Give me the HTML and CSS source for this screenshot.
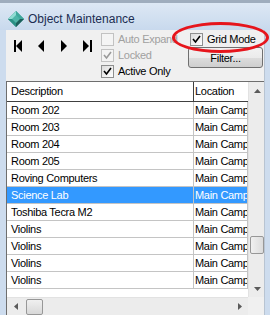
FILE: index.html
```html
<!DOCTYPE html>
<html>
<head>
<meta charset="utf-8">
<link rel="stylesheet" href="styles.css">
</head>
<body>
<div class="window">
  <div class="titlebar">
    <svg class="appicon" width="16" height="16" viewBox="0 0 16 16">
      <polygon points="8,0 16,8 8,16 0,8" fill="#2f8f86"/>
      <polygon points="8,0 8,8 0,8" fill="#8fdcd2"/>
      <polygon points="8,0 16,8 8,8" fill="#3fa89c"/>
      <polygon points="0,8 8,8 8,16" fill="#2a9085"/>
      <polygon points="16,8 8,8 8,16" fill="#1c5f5b"/>
      <polygon points="8,4 12,8 8,12 4,8" fill="#4fb5a8"/>
    </svg>
    <span class="title">Object Maintenance</span>
  </div>
  <div class="body">
    <div class="frame-left"></div>
    <div class="content">
      <div class="toolbar">
        <div class="nav">
          <button class="navbtn"><svg width="9" height="12" viewBox="0 0 9 12"><rect x="0" y="0" width="2" height="12" fill="#000"/><polygon points="8,0 8,12 2,6" fill="#000"/></svg></button>
          <button class="navbtn"><svg width="7" height="12" viewBox="0 0 7 12"><polygon points="6,0 6,12 0,6" fill="#000"/></svg></button>
          <button class="navbtn"><svg width="7" height="12" viewBox="0 0 7 12"><polygon points="0,0 0,12 6,6" fill="#000"/></svg></button>
          <button class="navbtn"><svg width="9" height="12" viewBox="0 0 9 12"><polygon points="0,0 0,12 6,6" fill="#000"/><rect x="7" y="0" width="2" height="12" fill="#000"/></svg></button>
        </div>
        <div class="checks">
          <label class="check disabled"><span class="box"></span><span class="lbl">Auto Expand</span></label>
          <label class="check disabled"><span class="box"><svg width="9" height="9" viewBox="0 0 9 9"><polyline points="1,4 3.5,7 8,1" fill="none" stroke="#9a9a9a" stroke-width="1.6"/></svg></span><span class="lbl">Locked</span></label>
          <label class="check"><span class="box"><svg width="9" height="9" viewBox="0 0 9 9"><polyline points="1,4 3.5,7 8,1" fill="none" stroke="#000" stroke-width="1.6"/></svg></span><span class="lbl">Active Only</span></label>
        </div>
        <div class="side">
          <label class="check grid-mode"><span class="box"><svg width="9" height="9" viewBox="0 0 9 9"><polyline points="1,4 3.5,7 8,1" fill="none" stroke="#000" stroke-width="1.6"/></svg></span><span class="lbl">Grid Mode</span></label>
          <button class="filter">Filter...</button>
        </div>
      </div>
      <div class="grid">
        <div class="gridmain">
          <div class="table">
            <div class="row head"><div class="c1">Description</div><div class="c2">Location</div></div>
            <div class="row"><div class="c1">Room 202</div><div class="c2">Main Camp</div></div>
            <div class="row"><div class="c1">Room 203</div><div class="c2">Main Camp</div></div>
            <div class="row"><div class="c1">Room 204</div><div class="c2">Main Camp</div></div>
            <div class="row"><div class="c1">Room 205</div><div class="c2">Main Camp</div></div>
            <div class="row"><div class="c1">Roving Computers</div><div class="c2">Main Camp</div></div>
            <div class="row sel"><div class="c1">Science Lab</div><div class="c2">Main Camp</div></div>
            <div class="row"><div class="c1">Toshiba Tecra M2</div><div class="c2">Main Camp</div></div>
            <div class="row"><div class="c1">Violins</div><div class="c2">Main Camp</div></div>
            <div class="row"><div class="c1">Violins</div><div class="c2">Main Camp</div></div>
            <div class="row"><div class="c1">Violins</div><div class="c2">Main Camp</div></div>
            <div class="row"><div class="c1">Violins</div><div class="c2">Main Camp</div></div>
          </div>
          <div class="vscroll">
            <div class="sbtn"><svg width="7" height="4" viewBox="0 0 7 4"><polygon points="0,4 7,4 3.5,0" fill="#5a5a5a"/></svg></div>
            <div class="vtrack"><div class="vthumb"></div></div>
            <div class="sbtn"><svg width="7" height="4" viewBox="0 0 7 4"><polygon points="0,0 7,0 3.5,4" fill="#5a5a5a"/></svg></div>
          </div>
        </div>
        <div class="hbar">
          <div class="hscroll">
            <div class="hbtn"><svg width="4" height="7" viewBox="0 0 4 7"><polygon points="4,0 4,7 0,3.5" fill="#5a5a5a"/></svg></div>
            <div class="hthumb"></div>
            <div class="htrack"></div>
            <div class="hbtn"><svg width="4" height="7" viewBox="0 0 4 7"><polygon points="0,0 0,7 4,3.5" fill="#5a5a5a"/></svg></div>
          </div>
          <div class="corner"></div>
        </div>
      </div>
    </div>
    <div class="frame-right"></div>
  </div>
</div>
<div class="highlight"></div>
</body>
</html>
```
FILE: styles.css
```css
html, body {
  margin: 0;
  padding: 0;
}
body {
  width: 270px;
  height: 315px;
  overflow: hidden;
  background: #cddcee;
  font-family: "Liberation Sans", Arial, sans-serif;
  font-size: 11px;
  letter-spacing: -0.3px;
  color: #000;
  position: relative;
}
.window {
  display: flex;
  flex-direction: column;
  height: 315px;
}
.titlebar {
  height: 30px;
  box-sizing: border-box;
  border-top: 3px solid #9fadbd;
  background: linear-gradient(#dde8f4, #c8d9ed);
  display: flex;
  align-items: flex-start;
  padding: 8px 0 0 8px;
  flex: none;
}
.appicon {
  flex: none;
}
.title {
  margin-left: 4px;
  font-size: 12px;
  letter-spacing: 0;
  line-height: 14px;
  margin-top: 1px;
  color: #1b2d52;
}
.body {
  flex: 1;
  display: flex;
  min-height: 0;
}
.frame-left {
  width: 6px;
  flex: none;
}
.frame-right {
  width: 6px;
  flex: none;
  border-left: 1px solid #b8c4d2;
}
.content {
  width: 258px;
  flex: none;
  background: #f0f0f0;
  display: flex;
  flex-direction: column;
}
.toolbar {
  height: 51px;
  flex: none;
  display: flex;
  align-items: flex-start;
}
.nav {
  display: flex;
  margin-left: 1px;
  padding-top: 10px;
}
.navbtn {
  width: 23px;
  height: 12px;
  padding: 0;
  margin: 0;
  border: 0;
  background: none;
  display: flex;
  justify-content: center;
  align-items: center;
}
.navbtn svg {
  display: block;
}
.checks {
  margin-left: 2px;
  padding-top: 3px;
  width: 85px;
  display: flex;
  flex-direction: column;
  gap: 3px;
  overflow: hidden;
}
.check {
  display: flex;
  align-items: center;
  height: 13px;
  white-space: nowrap;
}
.box {
  width: 13px;
  height: 13px;
  box-sizing: border-box;
  border: 1px solid #8e8f8f;
  background: linear-gradient(135deg, #dcdcdc, #ffffff);
  display: flex;
  align-items: center;
  justify-content: center;
  flex: none;
}
.box svg {
  display: block;
}
.lbl {
  margin-left: 4px;
  line-height: 13px;
}
.check.disabled .box {
  border-color: #c2c2c2;
  background: #f4f4f4;
}
.check.disabled .lbl {
  color: #a0a0a0;
}
.side {
  display: flex;
  flex-direction: column;
  padding-top: 3px;
  margin-left: 2px;
}
.grid-mode {
  margin-left: 2px;
  position: relative;
  z-index: 1;
}
.filter {
  margin-top: 1px;
  width: 75px;
  height: 21px;
  box-sizing: border-box;
  border: 1px solid #707070;
  border-radius: 3px;
  background: linear-gradient(#f2f2f2 0%, #ebebeb 50%, #dddddd 51%, #cfcfcf 100%);
  font-family: "Liberation Sans", Arial, sans-serif;
  font-size: 11px;
  letter-spacing: -0.3px;
  color: #000;
  padding: 0;
}
.grid {
  flex: 1;
  display: flex;
  flex-direction: column;
  border-left: 1px solid #6e6e6e;
  border-top: 1px solid #6e6e6e;
  background: #fff;
  min-height: 0;
}
.gridmain {
  height: 215px;
  display: flex;
  flex: none;
}
.table {
  width: 241px;
  overflow: hidden;
  flex: none;
}
.row {
  display: flex;
  height: 17px;
  box-sizing: border-box;
  border-bottom: 1px solid #c4c4c4;
  line-height: 16px;
  white-space: nowrap;
}
.row.head {
  height: 20px;
  line-height: 19px;
  border-bottom: 1px solid #404040;
}
.c1 {
  width: 186px;
  box-sizing: border-box;
  padding-left: 4px;
  flex: none;
  overflow: hidden;
}
.c2 {
  width: 55px;
  box-sizing: border-box;
  padding-left: 1px;
  border-left: 1px solid #c4c4c4;
  border-right: 1px solid #c4c4c4;
  flex: none;
  overflow: hidden;
}
.row.head .c2 {
  border-left-color: #404040;
  border-right: 0;
}
.row.sel {
  background: #3399ff;
  color: #fff;
}
.vscroll {
  width: 16px;
  flex: none;
  background: #ececec;
  border-left: 1px solid #e2e2e2;
  display: flex;
  flex-direction: column;
}
.sbtn {
  height: 17px;
  display: flex;
  align-items: center;
  justify-content: center;
  flex: none;
}
.sbtn svg {
  display: block;
}
.vtrack {
  flex: 1;
  display: flex;
  flex-direction: column;
  justify-content: flex-end;
  padding-bottom: 26px;
}
.vthumb {
  height: 16px;
  margin: 0 1px 0 1px;
  border: 1px solid #979797;
  border-radius: 2px;
  background: linear-gradient(90deg, #f0f0f0, #dcdcdc);
}
.hbar {
  flex: 1;
  display: flex;
  background: #ececec;
}
.hscroll {
  width: 241px;
  display: flex;
  align-items: stretch;
  border-top: 1px solid #e2e2e2;
}
.hbtn {
  width: 17px;
  display: flex;
  align-items: center;
  justify-content: center;
  height: 17px;
}
.hbtn svg {
  display: block;
}
.hthumb {
  width: 15px;
  height: 14px;
  margin-top: 1px;
  margin-left: 2px;
  border: 1px solid #979797;
  border-radius: 2px;
  background: linear-gradient(#f0f0f0, #d8d8d8);
}
.htrack {
  flex: 1;
}
.corner {
  flex: 1;
  background: #f0f0f0;
}
.highlight {
  position: absolute;
  left: 172px;
  top: 22px;
  width: 97px;
  height: 31px;
  box-sizing: border-box;
  border: 3px solid #e6151c;
  border-radius: 50%;
  pointer-events: none;
}
```
